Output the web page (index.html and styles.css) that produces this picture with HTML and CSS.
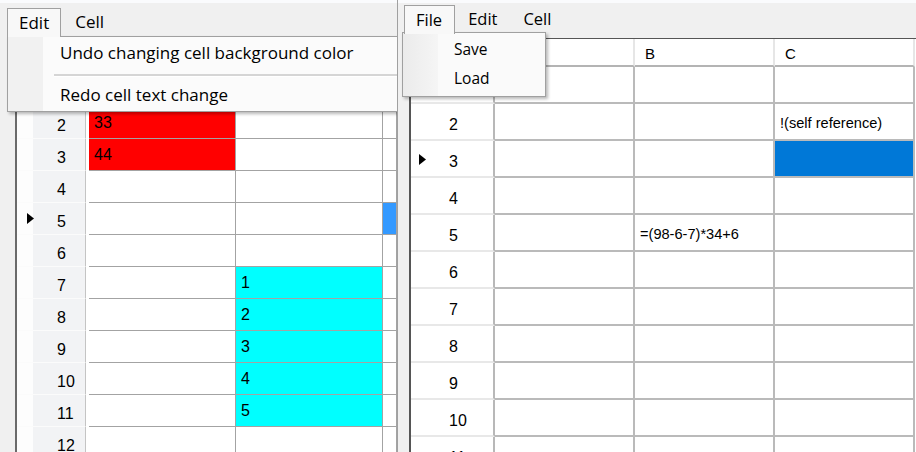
FILE: index.html
```html
<!DOCTYPE html>
<html>
<head>
<meta charset="utf-8">
<link rel="stylesheet" href="styles.css">
</head>
<body>
<div class="screen">
  <section class="pane pane-left">
    <div class="titleedge"></div>
    <nav class="menubar">
      <span class="menuitem open">Edit</span>
      <span class="menuitem">Cell</span>
    </nav>
    <div class="grid grid-left">
      <div class="row head"><div class="rh"></div><div class="gap"></div><div class="c a"></div><div class="c b"></div><div class="c cc"></div></div>
      <div class="row"><div class="rh"><span class="slot"></span></div><div class="gap"></div><div class="c a"></div><div class="c b"></div><div class="c cc"></div></div>
      <div class="row"><div class="rh"><span class="slot"></span>2</div><div class="gap"></div><div class="c a red">33</div><div class="c b"></div><div class="c cc"></div></div>
      <div class="row"><div class="rh"><span class="slot"></span>3</div><div class="gap"></div><div class="c a red">44</div><div class="c b"></div><div class="c cc"></div></div>
      <div class="row"><div class="rh"><span class="slot"></span>4</div><div class="gap"></div><div class="c a"></div><div class="c b"></div><div class="c cc"></div></div>
      <div class="row"><div class="rh"><span class="slot"><svg width="7" height="11" viewBox="0 0 7 11"><path d="M0 0 L7 5.5 L0 11 Z" fill="#000"/></svg></span>5</div><div class="gap"></div><div class="c a"></div><div class="c b"></div><div class="c cc sel-left"></div></div>
      <div class="row"><div class="rh"><span class="slot"></span>6</div><div class="gap"></div><div class="c a"></div><div class="c b"></div><div class="c cc"></div></div>
      <div class="row"><div class="rh"><span class="slot"></span>7</div><div class="gap"></div><div class="c a"></div><div class="c b cyan">1</div><div class="c cc"></div></div>
      <div class="row"><div class="rh"><span class="slot"></span>8</div><div class="gap"></div><div class="c a"></div><div class="c b cyan">2</div><div class="c cc"></div></div>
      <div class="row"><div class="rh"><span class="slot"></span>9</div><div class="gap"></div><div class="c a"></div><div class="c b cyan">3</div><div class="c cc"></div></div>
      <div class="row"><div class="rh"><span class="slot"></span>10</div><div class="gap"></div><div class="c a"></div><div class="c b cyan">4</div><div class="c cc"></div></div>
      <div class="row"><div class="rh"><span class="slot"></span>11</div><div class="gap"></div><div class="c a"></div><div class="c b cyan">5</div><div class="c cc"></div></div>
      <div class="row"><div class="rh"><span class="slot"></span>12</div><div class="gap"></div><div class="c a"></div><div class="c b"></div><div class="c cc"></div></div>
    </div>
    <div class="dropdown dd-left">
      <div class="ddi">Undo changing cell background color</div>
      <div class="ddsep"></div>
      <div class="ddi">Redo cell text change</div>
    </div>
  </section>

  <section class="pane pane-right">
    <div class="titleedge"></div>
    <nav class="menubar">
      <span class="menuitem open">File</span>
      <span class="menuitem">Edit</span>
      <span class="menuitem">Cell</span>
    </nav>
    <div class="grid grid-right">
      <div class="row head"><div class="rh"></div><div class="c"></div><div class="c">B</div><div class="c">C</div></div>
      <div class="row"><div class="rh"><span class="slot"></span></div><div class="c"></div><div class="c"></div><div class="c"></div></div>
      <div class="row"><div class="rh"><span class="slot"></span>2</div><div class="c"></div><div class="c"></div><div class="c">!(self reference)</div></div>
      <div class="row"><div class="rh"><span class="slot"><svg width="7" height="11" viewBox="0 0 7 11"><path d="M0 0 L7 5.5 L0 11 Z" fill="#000"/></svg></span>3</div><div class="c"></div><div class="c"></div><div class="c sel-right"></div></div>
      <div class="row"><div class="rh"><span class="slot"></span>4</div><div class="c"></div><div class="c"></div><div class="c"></div></div>
      <div class="row"><div class="rh"><span class="slot"></span>5</div><div class="c"></div><div class="c">=(98-6-7)*34+6</div><div class="c"></div></div>
      <div class="row"><div class="rh"><span class="slot"></span>6</div><div class="c"></div><div class="c"></div><div class="c"></div></div>
      <div class="row"><div class="rh"><span class="slot"></span>7</div><div class="c"></div><div class="c"></div><div class="c"></div></div>
      <div class="row"><div class="rh"><span class="slot"></span>8</div><div class="c"></div><div class="c"></div><div class="c"></div></div>
      <div class="row"><div class="rh"><span class="slot"></span>9</div><div class="c"></div><div class="c"></div><div class="c"></div></div>
      <div class="row"><div class="rh"><span class="slot"></span>10</div><div class="c"></div><div class="c"></div><div class="c"></div></div>
      <div class="row"><div class="rh"><span class="slot"></span>11</div><div class="c"></div><div class="c"></div><div class="c"></div></div>
    </div>
    <div class="dropdown dd-right">
      <div class="ddi">Save</div>
      <div class="ddi">Load</div>
    </div>
  </section>
</div>
</body>
</html>
```
FILE: styles.css
```css
* { box-sizing: border-box; margin: 0; padding: 0; }
html, body { width: 916px; height: 452px; overflow: hidden; }
body {
  font-family: "Liberation Sans", Arial, sans-serif;
  background: #f0f0f0;
  color: #000;
}
.screen { display: flex; height: 452px; }

.pane {
  position: relative;
  overflow: hidden;
  background: #f0f0f0;
  display: flex;
  flex-direction: column;
  height: 452px;
}
.pane-left { width: 398px; border-right: 1px solid #a0a0a0; }
.pane-right { flex: 1; }

.titleedge { height: 3px; background: #fafbfd; flex: none; }

.menubar {
  flex: none;
  height: 35px;
  display: flex;
  align-items: flex-start;
  font-family: "Open Sans", "Noto Sans", sans-serif;
  color: #000;
}
.pane-left .menubar { padding: 5px 0 0 7px; font-size: 17px; }
.pane-right .menubar { padding: 2px 0 0 6px; font-size: 16.5px; }

.menuitem {
  display: flex;
  align-items: center;
  height: 28px;
  padding: 0 13px 2px;
  border: 1px solid transparent;
}
.pane-left .menuitem.open { padding: 0 11px 2px; }
.pane-right .menuitem { padding: 0 12px 2px; }
.pane-right .menuitem.open { padding: 0 12px 2px 11px; }
.menuitem.open {
  position: relative;
  z-index: 3;
  height: 29px;
  border-color: #a0a0a0;
  border-bottom: none;
  background: #f8f8f8;
}

/* grids */
.grid { flex: 1; background: #fff; overflow: hidden; }
.row { display: flex; }
.c {
  display: flex;
  align-items: center;
  flex: none;
  white-space: nowrap;
  overflow: hidden;
}
.rh {
  display: flex;
  align-items: center;
  flex: none;
}
.slot { display: inline-flex; align-items: center; width: 30px; flex: none; }

/* left grid */
.grid-left {
  margin-left: 15px;
  border-left: 2px solid #6a6a6a;
  font-size: 16px;
}
.grid-left .row { height: 32px; }
.grid-left .row.head { height: 37px; }
.grid-left .rh {
  width: 69px;
  padding: 6px 0 0 10px;
  border-right: 1px solid #c4c4c4;
  border-bottom: 1px solid #fbfbfb;
  background: linear-gradient(to right, #fdfdfd 16px, #f2f3f5 16px);
}
.grid-left .rh .slot { margin-top: -6px; }
.grid-left .gap { width: 3px; flex: none; }
.grid-left .c {
  padding: 1px 0 0 5px;
  border-right: 1px solid #a3a3a3;
  border-bottom: 1px solid #a3a3a3;
}
.grid-left .c.a { width: 147px; }
.grid-left .c.b { width: 147px; }
.grid-left .c.cc { flex: 1; }
.red { background: #ff0000; }
.cyan { background: #00ffff; }
.sel-left { background: #3399ff; }

/* right grid */
.grid-right {
  margin-left: 11px;
  border-left: 2px solid #555;
  border-top: 1px solid #555;
  font-size: 14.6px;
}
.grid-right .row { height: 37px; }
.grid-right .row.head { height: 28px; font-size: 15px; }
.grid-right .rh {
  width: 84px;
  padding: 6px 0 0 8px;
  font-size: 16px;
  border-right: 2px solid #b8b8b8;
  border-bottom: 2px solid #e8e8e8;
}
.grid-right .rh .slot { margin-top: -5px; }
.grid-right .c {
  width: 140px;
  padding: 3px 0 0 5px;
  border-right: 2px solid #bababa;
  border-bottom: 2px solid #bababa;
}
.grid-right .head .c {
  padding: 2px 0 0 10px;
  border-right-color: #e6e6e6;
  border-bottom-color: #b4b4b4;
}
.grid-right .head .rh { border-bottom-color: #b4b4b4; }
.sel-right { background: #0078d7; }

/* dropdown menus */
.dropdown {
  position: absolute;
  z-index: 2;
  border: 1px solid #a0a0a0;
  font-family: "Open Sans", "Noto Sans", sans-serif;
  color: #000;
  box-shadow: 2px 2px 3px rgba(0,0,0,0.28);
}
.dd-left {
  left: 7px;
  top: 36px;
  width: 440px;
  padding: 1px 0 1px;
  font-size: 17px;
  background: linear-gradient(to right, #f1f1f1 35px, #fbfbfb 35px);
}
.dd-left .ddi {
  height: 30px;
  display: flex;
  align-items: center;
  padding: 0 0 2px 52px;
}
.ddsep {
  height: 12px;
  margin-left: 46px;
  border-top: 6px solid transparent;
}
.ddsep::before {
  content: "";
  display: block;
  height: 2px;
  background: #d5d5d5;
  border-bottom: 1px solid #ffffff;
}
.dd-right {
  left: 4px;
  top: 32px;
  width: 144px;
  height: 65px;
  padding-top: 2px;
  font-size: 15.5px;
  background: linear-gradient(to right, #ebebeb 0, #f5f5f5 35px, #fafafa 35px);
}
.dd-right .ddi {
  height: 29px;
  display: flex;
  align-items: center;
  padding: 0 0 2px 51px;
}
```
